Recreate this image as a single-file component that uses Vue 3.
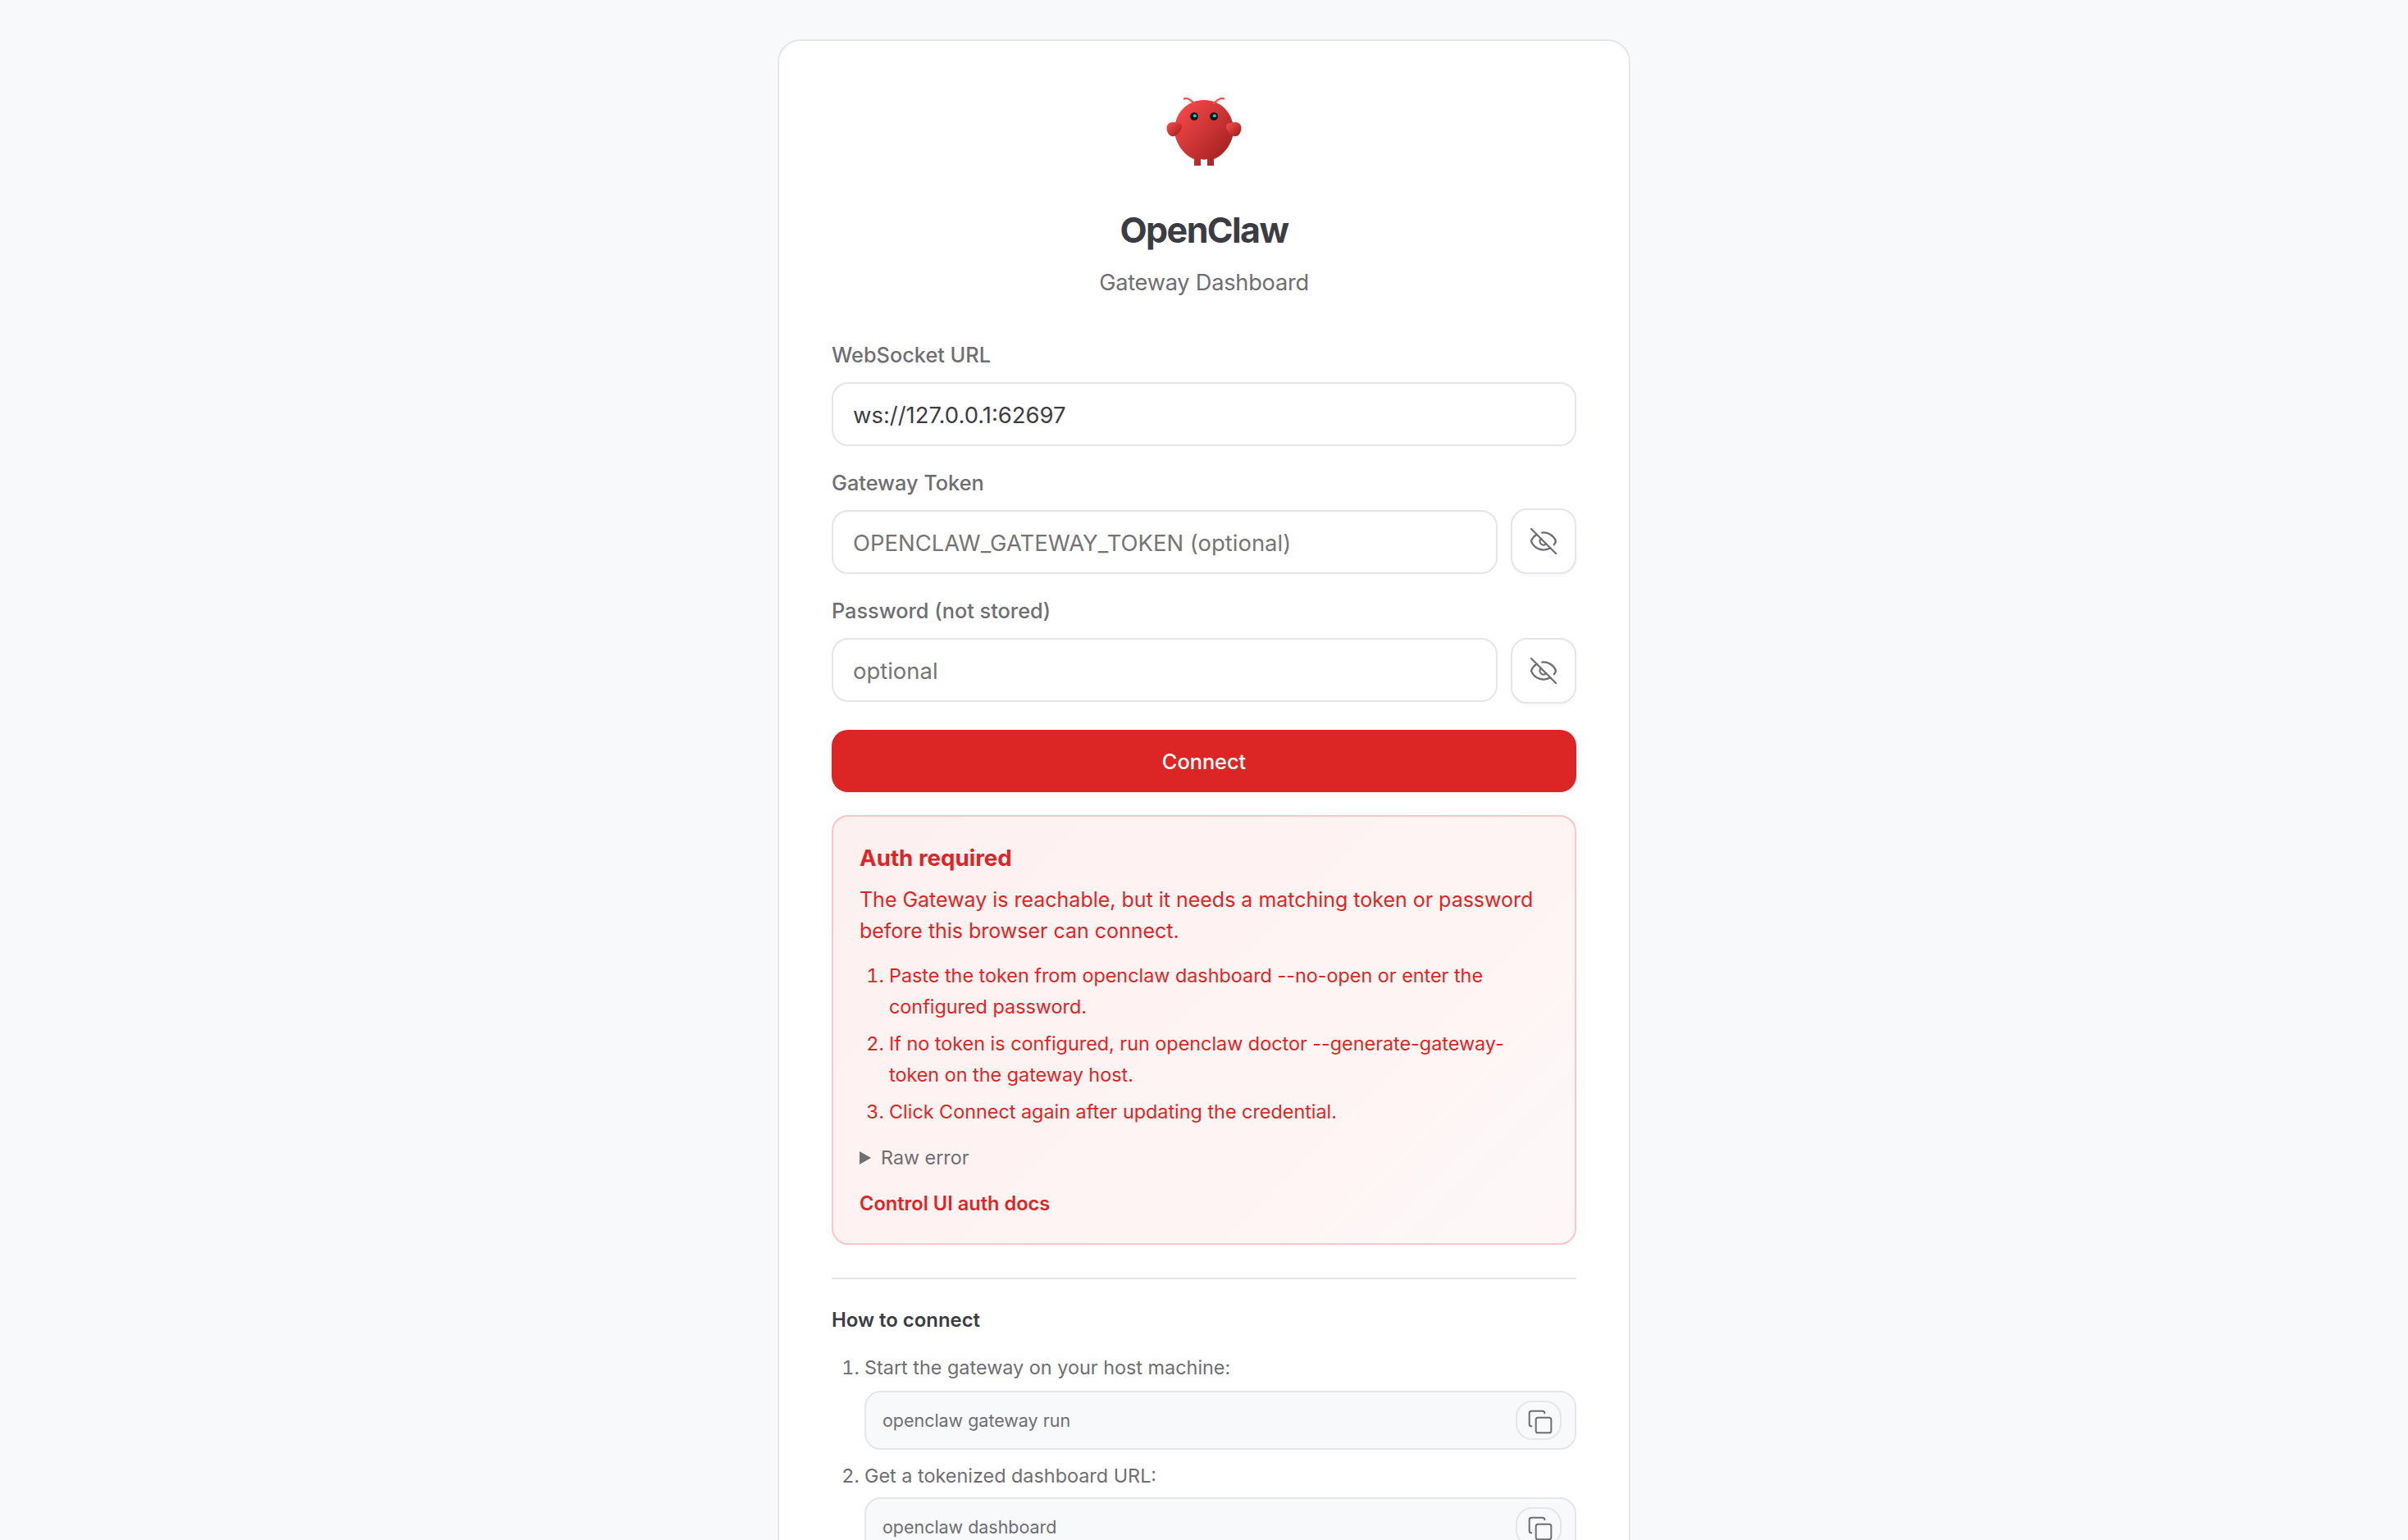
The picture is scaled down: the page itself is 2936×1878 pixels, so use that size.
<script setup>
import { ref } from 'vue'

const url = ref('ws://127.0.0.1:62697')
const token = ref('')
const password = ref('')
const showToken = ref(false)
const showPassword = ref(false)

const hints = [
  'Paste the token from openclaw dashboard --no-open or enter the configured password.',
  'If no token is configured, run openclaw doctor --generate-gateway-token on the gateway host.',
  'Click Connect again after updating the credential.',
]

const steps = [
  { text: 'Start the gateway on your host machine:', command: 'openclaw gateway run' },
  { text: 'Get a tokenized dashboard URL:', command: 'openclaw dashboard' },
]

function copy(command) {
  navigator.clipboard?.writeText(command)
}
</script>

<template>
  <div class="page">
    <main class="card">
      <header class="header">
        <svg class="logo" viewBox="0 0 120 120" fill="none">
          <defs>
            <linearGradient id="lobster" x1="0%" y1="0%" x2="100%" y2="100%">
              <stop offset="0%" stop-color="#ff4d4d" />
              <stop offset="100%" stop-color="#991b1b" />
            </linearGradient>
          </defs>
          <path d="M60 10C30 10 15 35 15 55C15 75 30 95 45 100L45 110L55 110L55 100C55 100 60 102 65 100L65 110L75 110L75 100C90 95 105 75 105 55C105 35 90 10 60 10Z" fill="url(#lobster)" />
          <path d="M20 45C5 40 0 50 5 60C10 70 20 65 25 55C28 48 25 45 20 45Z" fill="url(#lobster)" />
          <path d="M100 45C115 40 120 50 115 60C110 70 100 65 95 55C92 48 95 45 100 45Z" fill="url(#lobster)" />
          <path d="M45 15Q35 5 30 8M75 15Q85 5 90 8" stroke="#ff4d4d" stroke-width="3" stroke-linecap="round" />
          <circle cx="45" cy="35" r="6" fill="#050810" />
          <circle cx="75" cy="35" r="6" fill="#050810" />
          <circle cx="46" cy="34" r="2.5" fill="#00e5cc" />
          <circle cx="76" cy="34" r="2.5" fill="#00e5cc" />
        </svg>
        <h1>OpenClaw</h1>
        <p>Gateway Dashboard</p>
      </header>

      <form class="form" @submit.prevent>
        <label class="field">
          <span>WebSocket URL</span>
          <input v-model="url" type="text" spellcheck="false" />
        </label>
        <div class="field token">
          <label for="token">Gateway Token</label>
          <div class="row">
            <input id="token" v-model="token" :type="showToken ? 'text' : 'password'" placeholder="OPENCLAW_GATEWAY_TOKEN (optional)" />
            <button type="button" class="toggle" title="Show token" @click="showToken = !showToken">
              <svg viewBox="0 0 24 24">
                <path d="M10.733 5.076a10.744 10.744 0 0 1 11.205 6.575 1 1 0 0 1 0 .696 10.747 10.747 0 0 1-1.444 2.49" />
                <path d="M14.084 14.158a3 3 0 0 1-4.242-4.242" />
                <path d="M17.479 17.499a10.75 10.75 0 0 1-15.417-5.151 1 1 0 0 1 0-.696 10.75 10.75 0 0 1 4.446-5.143" />
                <path d="m2 2 20 20" />
              </svg>
            </button>
          </div>
        </div>
        <div class="field">
          <label for="password">Password (not stored)</label>
          <div class="row">
            <input id="password" v-model="password" :type="showPassword ? 'text' : 'password'" placeholder="optional" />
            <button type="button" class="toggle" title="Show password" @click="showPassword = !showPassword">
              <svg viewBox="0 0 24 24">
                <path d="M10.733 5.076a10.744 10.744 0 0 1 11.205 6.575 1 1 0 0 1 0 .696 10.747 10.747 0 0 1-1.444 2.49" />
                <path d="M14.084 14.158a3 3 0 0 1-4.242-4.242" />
                <path d="M17.479 17.499a10.75 10.75 0 0 1-15.417-5.151 1 1 0 0 1 0-.696 10.75 10.75 0 0 1 4.446-5.143" />
                <path d="m2 2 20 20" />
              </svg>
            </button>
          </div>
        </div>
        <button type="submit" class="connect">Connect</button>
      </form>

      <section class="callout">
        <h2>Auth required</h2>
        <p>The Gateway is reachable, but it needs a matching token or password before this browser can connect.</p>
        <ol>
          <li v-for="hint in hints" :key="hint">{{ hint }}</li>
        </ol>
        <details>
          <summary>
            <svg viewBox="0 0 14 16"><path d="M0 0L14 8L0 16Z" /></svg>
            Raw error
          </summary>
        </details>
        <a>Control UI auth docs</a>
      </section>

      <section class="help">
        <h3>How to connect</h3>
        <ol>
          <li v-for="step in steps" :key="step.command">
            {{ step.text }}
            <div class="command">
              <code>{{ step.command }}</code>
              <button type="button" title="Copy command" @click="copy(step.command)">
                <svg viewBox="0 0 24 24">
                  <rect width="14" height="14" x="8" y="8" rx="2" />
                  <path d="M4 16c-1.1 0-2-.9-2-2V4c0-1.1.9-2 2-2h10c1.1 0 2 .9 2 2" />
                </svg>
              </button>
            </div>
          </li>
        </ol>
      </section>
    </main>
  </div>
</template>

<style>
body {
  background: #f8f9fb;
}
</style>

<style scoped>
* {
  box-sizing: border-box;
}
.page {
  height: 100vh;
  overflow: hidden;
  display: flex;
  justify-content: center;
  align-items: flex-start;
  padding-top: 48px;
  color: #3c3c43;
  font-family: Inter, "Liberation Sans", sans-serif;
}
.card {
  width: 1040px;
  padding: 64px;
  background: #fff;
  border: 2px solid #e5e5ea;
  border-radius: 28px;
}
h1, h2, h3, p, ol {
  margin: 0;
}
button, input {
  font-family: inherit;
}

.header {
  display: flex;
  flex-direction: column;
  align-items: center;
}
.logo {
  width: 96px;
  height: 96px;
  margin-bottom: 44px;
}
.header h1 {
  font-size: 43px;
  line-height: 52px;
  font-weight: 700;
  letter-spacing: -1.59px;
}
.header p {
  margin-top: 19px;
  font-size: 27.2px;
  line-height: 40px;
  letter-spacing: -0.24px;
  color: #6e6e73;
}

.form {
  display: flex;
  flex-direction: column;
  gap: 26px;
  margin-top: 49px;
}
.field {
  display: flex;
  flex-direction: column;
  gap: 14px;
  font-size: 25.3px;
  line-height: 38px;
  font-weight: 500;
  color: #6e6e73;
}
.row {
  display: flex;
  align-items: flex-start;
  gap: 16px;
}
input {
  flex: 1;
  min-width: 0;
  height: 78px;
  min-height: 78px;
  padding: 2px 24px 0;
  font-size: 27.45px;
  color: #3c3c43;
  background: #fff;
  border: 2px solid #e5e5ea;
  border-radius: 20px;
  box-shadow: inset 0 2px 2px rgba(0, 0, 0, 0.02);
  outline: none;
}
input::placeholder {
  color: #757575;
}
.toggle {
  display: flex;
  align-items: center;
  justify-content: center;
  width: 80px;
  height: 80px;
  padding: 0;
  color: #6e6e73;
  background: #fff;
  border: 2px solid #e5e5ea;
  border-radius: 20px;
  box-shadow: 0 2px 4px rgba(0, 0, 0, 0.04);
}
.token .row {
  height: 78px;
}
.token .toggle {
  margin-top: -2px;
}
.toggle svg {
  width: 36px;
  height: 36px;
}
.toggle svg, .command svg {
  fill: none;
  stroke: currentColor;
  stroke-width: 1.5;
  stroke-linecap: round;
  stroke-linejoin: round;
}
.connect {
  height: 76px;
  margin-top: 6px;
  padding: 1px 0 0;
  font-size: 25.3px;
  font-weight: 500;
  color: #fff;
  background: #dc2626;
  border: 0;
  border-radius: 20px;
  box-shadow: 0 2px 6px rgba(220, 38, 38, 0.08);
}

.callout {
  margin-top: 28px;
  padding: 28px 32px 30px;
  color: #dc2626;
  background: linear-gradient(135deg, #fdf0f0, #fef4f3 55%, #fff5f5 76%, #fcf7f7 86%, #fff7f7);
  border: 2px solid #fac6c7;
  border-radius: 20px;
}
.callout h2 {
  font-size: 27.7px;
  line-height: 44px;
  font-weight: 700;
}
.callout p {
  margin-top: 10px;
  font-size: 24.98px;
  line-height: 38px;
}
.callout ol {
  display: flex;
  flex-direction: column;
  gap: 8.6px;
  margin-top: 17.3px;
  padding-left: 36px;
  font-size: 23.36px;
  line-height: 37.2px;
}
summary {
  display: flex;
  align-items: center;
  gap: 12px;
  margin-top: 18.6px;
  font-size: 23.3px;
  line-height: 37.5px;
  color: #6e6e73;
}
summary svg {
  width: 14px;
  height: 16px;
  fill: currentColor;
}
.callout a {
  display: block;
  margin-top: 18.3px;
  font-size: 23.6px;
  line-height: 37.5px;
  font-weight: 600;
}

.help {
  margin-top: 40px;
  padding-top: 32px;
  border-top: 2px solid #e5e5ea;
}
.help h3 {
  font-size: 23.9px;
  line-height: 36px;
  font-weight: 600;
}
.help ol {
  display: flex;
  flex-direction: column;
  gap: 14px;
  margin-top: 22px;
  padding-left: 40px;
  font-size: 23.4px;
  line-height: 36px;
  color: #6e6e73;
}
.command {
  display: flex;
  align-items: center;
  justify-content: space-between;
  height: 72px;
  margin-top: 10px;
  padding: 0 16px 0 20px;
  background: #f8f9fb;
  border: 2px solid #e5e5ea;
  border-radius: 20px;
}
li + li .command {
  margin-top: 8px;
}
.command code {
  font-family: inherit;
  font-size: 21.45px;
}
.command button {
  width: 56px;
  height: 48px;
  padding: 8px 8px 4px 12px;
  color: #6e6e73;
  background: none;
  border: 2px solid #e5e5ea;
  border-radius: 20px;
}
.command svg {
  display: block;
  width: 32px;
  height: 32px;
}
</style>
